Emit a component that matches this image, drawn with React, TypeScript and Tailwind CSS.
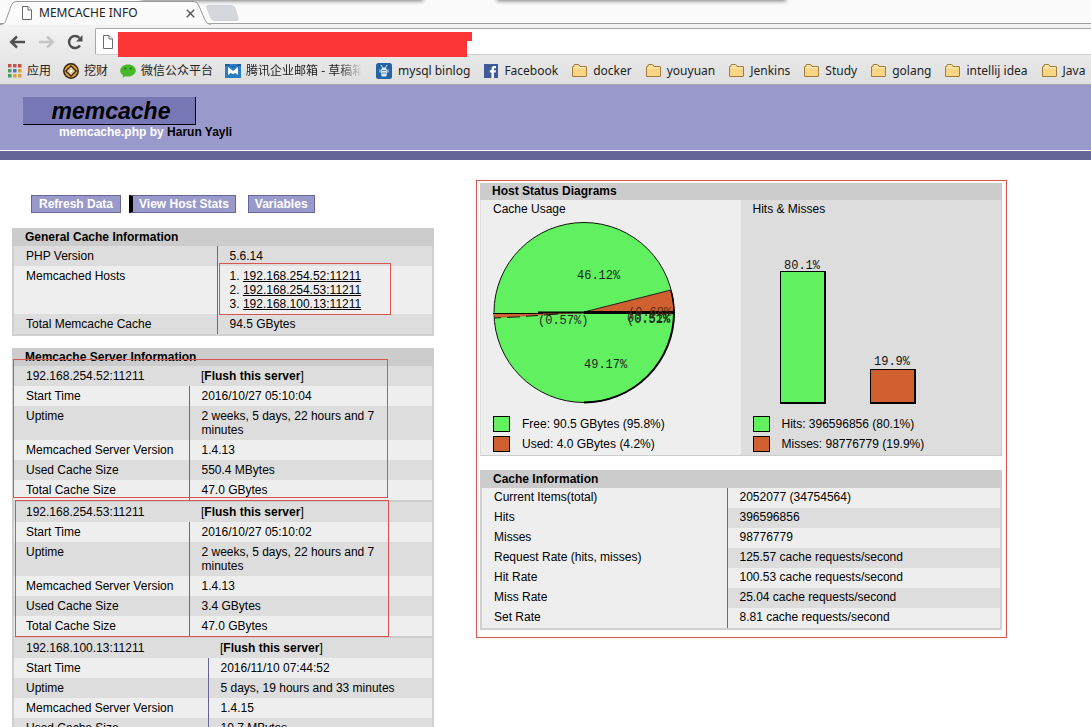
import { ReactNode } from "react";

type Row = [string, ReactNode];

const hosts = ["192.168.254.52:11211", "192.168.254.53:11211", "192.168.100.13:11211"];

const servers: { host: string; wide?: boolean; rows: Row[] }[] = [
  {
    host: hosts[0],
    rows: [
      ["Start Time", "2016/10/27 05:10:04"],
      ["Uptime", "2 weeks, 5 days, 22 hours and 7 minutes"],
      ["Memcached Server Version", "1.4.13"],
      ["Used Cache Size", "550.4 MBytes"],
      ["Total Cache Size", "47.0 GBytes"],
    ],
  },
  {
    host: hosts[1],
    rows: [
      ["Start Time", "2016/10/27 05:10:02"],
      ["Uptime", "2 weeks, 5 days, 22 hours and 7 minutes"],
      ["Memcached Server Version", "1.4.13"],
      ["Used Cache Size", "3.4 GBytes"],
      ["Total Cache Size", "47.0 GBytes"],
    ],
  },
  {
    host: hosts[2],
    wide: true,
    rows: [
      ["Start Time", "2016/11/10 07:44:52"],
      ["Uptime", "5 days, 19 hours and 33 minutes"],
      ["Memcached Server Version", "1.4.15"],
      ["Used Cache Size", "10.7 MBytes"],
    ],
  },
];

const cacheInfo: Row[] = [
  ["Current Items(total)", "2052077 (34754564)"],
  ["Hits", "396596856"],
  ["Misses", "98776779"],
  ["Request Rate (hits, misses)", "125.57 cache requests/second"],
  ["Hit Rate", "100.53 cache requests/second"],
  ["Miss Rate", "25.04 cache requests/second"],
  ["Set Rate", "8.81 cache requests/second"],
];

/* ---------- browser ---------- */

const PageIcon = () => (
  <svg width="12" height="14" viewBox="0 0 12 14" className="shrink-0" fill="#fff" stroke="#6b6b6b">
    <path d="M1.5.5h5.5l3.5 3.5v9.500h-9z" />
    <path d="M7 .5v3.500h3.500" />
  </svg>
);

const AppsIcon = () => (
  <svg width="14" height="14" viewBox="0 0 14 14" className="shrink-0">
    <path fill="#c8504a" d="M0 0h3.500v3.500H0zM5 0h3.500v3.500H5zM10 0h3.500v3.500H10z" />
    <path fill="#4a9a62" d="M0 5h3.500v3.500H0z" />
    <path fill="#4a78c8" d="M5 5h3.500v3.500H5z" />
    <path fill="#dca23c" d="M10 5h3.500v3.500H10z" />
    <path fill="#4a9a62" d="M0 10h3.500v3.500H0z" />
    <path fill="#dca23c" d="M5 10h3.500v3.500H5zM10 10h3.500v3.500H10z" />
  </svg>
);

const CoinIcon = () => (
  <svg width="16" height="16" viewBox="0 0 16 16" className="shrink-0">
    <circle cx="8" cy="8" r="7.200" fill="#e0a030" stroke="#2e2418" strokeWidth="1.500" />
    <path d="M8 3 13 8 8 13 3 8z" fill="#fff" stroke="#3a2a18" strokeWidth="1.500" />
    <path d="M8 5.500 10.500 8 8 10.500 5.500 8z" fill="#fff" stroke="#e0a030" />
  </svg>
);

const WechatIcon = () => (
  <svg width="16" height="16" viewBox="0 0 16 16" className="shrink-0">
    <path
      d="M8 1.500c4.400 0 7.800 2.700 7.800 6s-3.400 6-7.800 6c-.9 0-1.800-.1-2.600-.3L2.500 14.800l.6-2.600C1.300 11.100.2 9.400.2 7.500c0-3.300 3.400-6 7.800-6z"
      fill="#46b829"
    />
    <circle cx="5.200" cy="5.600" r="1" fill="#1f6a12" />
    <circle cx="10.800" cy="5.600" r="1" fill="#1f6a12" />
  </svg>
);

const MailIcon = () => (
  <svg width="16" height="14" viewBox="0 0 16 14" className="shrink-0">
    <path d="M0 0h16v14H0z" fill="#2a7fc4" />
    <path d="M0 0h3l5 4 5-4h3v2H0z" fill="#1a5a9c" />
    <path d="M3 3l5 4 5-4v8l-2.500-2L8 10 5.500 9 3 11z" fill="#fff" />
  </svg>
);

const BinlogIcon = () => (
  <svg width="16" height="16" viewBox="0 0 16 16" className="shrink-0">
    <rect width="16" height="16" rx="2.500" fill="#2463a4" />
    <path d="M5 2l1.500 2.500M11 2 9.500 4.500M4 6.500v3M12 6.500v3" stroke="#dcebf8" fill="none" />
    <path d="M6 4.500h4l1 3-.5 6h-5L5 7.500z" fill="#dcebf8" />
    <path d="M6 7.500h4M6 10h4" stroke="#2463a4" strokeWidth=".7" />
  </svg>
);

const FacebookIcon = () => (
  <svg width="14" height="14" viewBox="0 0 14 14" className="shrink-0">
    <path d="M0 0h14v14H0z" fill="#3f5a98" />
    <path
      d="M7.500 14V8.500H5.800V6.300h1.700V4.800c0-1.900 1.100-2.800 2.800-2.800h1.700v2.200h-1.100c-.8 0-1 .4-1 1v1.100H12l-.3 2.200H9.900V14z"
      fill="#fff"
    />
  </svg>
);

const FolderIcon = () => (
  <svg width="15" height="14" viewBox="0 0 15 14" className="shrink-0">
    <path d="M.5 3V12.500h13.500q.5 0 .5-.5V3q0-.5-.5-.5H8L7 .8Q6.800.5 6.500.5h-4Q2 .5 2 1v1.500H1q-.5 0-.5.5z" fill="#f8d584" stroke="#a67a3c" />
    <path d="M1.500 3.800h12M2.800 1.800h3.500" stroke="#fdf0c8" />
  </svg>
);

const zhBookmarks: { label: string; icon: ReactNode; faded?: boolean }[] = [
  { label: "应用", icon: <AppsIcon /> },
  { label: "挖财", icon: <CoinIcon /> },
  { label: "微信公众平台", icon: <WechatIcon /> },
  { label: "腾讯企业邮箱 - 草稿箱", icon: <MailIcon />, faded: true },
];

const bookmarks: { label: string; icon: ReactNode }[] = [
  { label: "mysql binlog", icon: <BinlogIcon /> },
  { label: "Facebook", icon: <FacebookIcon /> },
  ...["docker", "youyuan", "Jenkins", "Study", "golang", "intellij idea", "Java"].map((label) => ({
    label,
    icon: <FolderIcon />,
  })),
];

const TabStrip = () => (
  <div className="relative h-6 bg-[#fbfbfb]">
    <div className="absolute -top-2 left-[142px] h-2 w-[280px] shadow-[0_0_4px_1px_#777]" />
    <div className="absolute -top-2 left-[498px] h-2 w-[287px] shadow-[0_0_4px_1px_#777]" />
    <div className="absolute inset-x-0 bottom-0 h-px bg-[#a2a2a2]" />
    <svg className="absolute left-0 top-0" width="245" height="25" viewBox="0 0 245 25">
      <path d="M0 24.500C4 24.500 5 23 6 20L11 6Q12.500 1.500 16 1.500H194Q197 1.500 199 6L205 20Q207 24.500 211 24.500" fill="#fbfbfb" stroke="#999" />
      <path d="M208 5.500H231Q234 5.500 235 8L238 18Q239 20.500 236 20.500H215Q212 20.500 211 18L207 8Q206 5.500 208 5.500z" fill="#d4d7dc" stroke="#cfd2d6" />
    </svg>
    <div className="relative flex h-6 w-[200px] items-center pl-[21px] pt-[2px]">
      <PageIcon />
      <span className="ml-[6px] flex-1 text-xs text-[#222]">MEMCACHE INFO</span>
      <button aria-label="Close tab" className="mr-[5px]">
        <svg width="9" height="9" viewBox="0 0 9 9" stroke="#5a5a5a" strokeWidth="1.500">
          <path d="M.8.8l7.400 7.400M8.200.8.8 8.200" />
        </svg>
      </button>
    </div>
  </div>
);

const Toolbar = () => (
  <div className="flex h-[34px] items-center pl-[9px] pt-px">
    <button aria-label="Back">
      <svg width="17" height="14" viewBox="0 0 17 14" fill="none" stroke="#505050" strokeWidth="2.500">
        <path d="M16 7H3M8 1.500 2.200 7 8 12.500" />
      </svg>
    </button>
    <button aria-label="Forward" className="ml-3">
      <svg width="17" height="14" viewBox="0 0 17 14" fill="none" stroke="#c6c6c6" strokeWidth="2.500">
        <path d="M1 7h13M9 1.500 14.800 7 9 12.500" />
      </svg>
    </button>
    <button aria-label="Reload" className="ml-3">
      <svg width="17" height="16" viewBox="0 0 17 16">
        <path d="M13 11.500A6 6 0 1 1 12.500 4" fill="none" stroke="#505050" strokeWidth="2.500" />
        <path d="M15.500 1v6.500H9z" fill="#505050" />
      </svg>
    </button>
    <div className="relative ml-[11px] flex h-[27px] flex-1 items-center rounded-l-xs border border-r-0 border-[#a8a8a8] border-b-[#cfcfcf] bg-white pl-[6px]">
      <PageIcon />
      <input aria-label="Address" className="ml-1 h-full flex-1 bg-transparent outline-none" />
      <div className="absolute left-[22px] top-[3px] h-[9px] w-[354px] bg-[#fc3636]" />
      <div className="absolute left-[22px] top-3 h-4 w-[349px] bg-[#fc3636]" />
    </div>
  </div>
);

const Bookmarks = () => (
  <nav className="flex h-[26px] items-center gap-[14px] overflow-hidden whitespace-nowrap pl-2 text-xs text-[#222]">
    <div className="flex shrink-0 gap-3">
      {zhBookmarks.map(({ label, icon, faded }) => (
        <a key={label} href="#" className="flex items-center gap-[5px]">
          {icon}
          <span
            className={
              faded ? "w-[116px] overflow-hidden [mask-image:linear-gradient(to_right,black_80%,transparent)]" : ""
            }
          >
            {label}
          </span>
        </a>
      ))}
    </div>
    {bookmarks.map(({ label, icon }) => (
      <a key={label} href="#" className="flex shrink-0 items-center gap-[6px]">
        {icon}
        {label}
      </a>
    ))}
  </nav>
);

/* ---------- tables ---------- */

const Title = ({ children }: { children: ReactNode }) => (
  <h2 className="bg-[#ccc] px-[13px] py-[2px] font-bold">{children}</h2>
);

const Panel = ({ title, children }: { title: string; children: ReactNode }) => (
  <section>
    <Title>{title}</Title>
    <div className="border-2 border-t-0 border-[#d0d0d0]">{children}</div>
  </section>
);

const GeneralInfo = () => (
  <Panel title="General Cache Information">
    <table className="w-full text-left align-top">
      <tbody className="[&_td]:px-3 [&_td]:py-[3px] [&_th]:w-[203px] [&_th]:border-r [&_th]:border-[#669] [&_th]:px-3 [&_th]:py-[3px] [&_th]:align-top [&_th]:font-normal">
        <tr className="bg-[#ddd]">
          <th scope="row">PHP Version</th>
          <td>5.6.14</td>
        </tr>
        <tr className="bg-[#eee]">
          <th scope="row">Memcached Hosts</th>
          <td className="relative">
            <ol>
              {hosts.map((host, i) => (
                <li key={host}>
                  {i + 1}.{" "}
                  <a href="#" className="underline">
                    {host}
                  </a>
                </li>
              ))}
            </ol>
            <div className="pointer-events-none absolute -top-[3px] left-px h-[52px] w-[172px] border border-[#d9534f]" />
          </td>
        </tr>
        <tr className="bg-[#ddd]">
          <th scope="row">Total Memcache Cache</th>
          <td>94.5 GBytes</td>
        </tr>
      </tbody>
    </table>
  </Panel>
);

const ServerInfo = () => (
  <div className="relative">
    <Panel title="Memcache Server Information">
      {servers.map(({ host, wide, rows }, n) => (
        <table key={host} className={`w-full text-left ${n > 0 ? "border-t-2 border-[#ccc]" : ""}`}>
          <tbody>
            <tr className="bg-[#ddd]">
              <th scope="row" className={`px-3 py-[3px] font-normal ${wide ? "w-[194px]" : "w-[175px]"}`}>
                {host}
              </th>
              <td className="px-3 py-[3px]">
                [
                <a href="#" className="font-bold">
                  Flush this server
                </a>
                ]
              </td>
            </tr>
            {rows.map(([name, value], i) => (
              <tr key={name} className={i % 2 ? "bg-[#ddd]" : "bg-[#eee]"}>
                <th scope="row" className="border-r border-[#669] px-3 py-[3px] align-top font-normal">
                  {name}
                </th>
                <td className="py-[3px] pl-3 pr-6">{value}</td>
              </tr>
            ))}
          </tbody>
        </table>
      ))}
    </Panel>
    <div className="pointer-events-none absolute left-px right-[46px] top-[11px] h-[139px] border border-[#d9534f]" />
    <div className="pointer-events-none absolute left-[3px] right-[45px] top-[152px] h-[137px] border border-[#d9534f]" />
  </div>
);

/* ---------- charts ---------- */

const Legend = ({ items }: { items: string[] }) => (
  <ul>
    {items.map((text, i) => (
      <li key={text} className="flex h-5 items-center gap-3">
        <span className={`h-4 w-[17px] border border-black ${i ? "bg-[#d06030]" : "bg-[#60f060]"}`} />
        {text}
      </li>
    ))}
  </ul>
);

const Pie = () => (
  <svg width="190" height="194" viewBox="0 0 190 194" className="block">
    <circle cx="91" cy="92.500" r="90" fill="#60f060" stroke="#111" />
    <path d="M91 92 178 70A90 90 0 0 1 181 92z" fill="#d06030" stroke="#222" />
    <path d="M91 93H1L2 98 60 94.500z" fill="#d06030" />
    <path d="M0 93.500H50" stroke="#000" />
    <path d="M2 98 8 97.600M14 97.400 27 96.800M33 96.200 45 95.500M51 95 65 94" stroke="#111" />
    <path d="M45 92.500H91" stroke="#000" strokeWidth="2" />
    <path d="M91 92.500H181" stroke="#000" strokeWidth="3" />
    <path d="M178 71Q181 81 181 93" fill="none" stroke="#000" strokeWidth="1.500" />
    <path d="M181 92.500A90 90 0 0 1 91 182.500" fill="none" stroke="#000" strokeWidth="2" />
    <g fontSize="12" fill="#202820" className="font-['Liberation_Mono',monospace]">
      <text x="84" y="59">46.12%</text>
      <text x="91" y="148">49.17%</text>
      <text x="45" y="104">(0.57%)</text>
      <text x="135" y="96" fill="#5a2c14">(0.68%</text>
      <text x="134" y="103">(0.52%</text>
      <text x="134" y="102">00.51%</text>
    </g>
  </svg>
);

const Bars = () => (
  <svg width="190" height="194" viewBox="0 0 190 194" className="block">
    <path d="M27 51h46v133H27zM117 149h46v35h-46z" fill="#000" />
    <path d="M28 52h43v130H28z" fill="#60f060" />
    <path d="M118 150h43v32h-43z" fill="#d06030" />
    <g fontSize="12" fill="#111" className="font-['Liberation_Mono',monospace]">
      <text x="31" y="49">80.1%</text>
      <text x="121" y="145">19.9%</text>
    </g>
  </svg>
);

const Diagrams = () => (
  <section>
    <h2 className="bg-[#ccc] px-3 pb-[2px] pt-px font-bold">Host Status Diagrams</h2>
    <div className="grid grid-cols-2 border-b border-r border-[#ccc] bg-[#ddd]">
      <figure className="border-l border-[#ddd] bg-[#eee] pb-px pl-3">
        <figcaption className="h-5 pt-[2px]">Cache Usage</figcaption>
        <Pie />
        <Legend items={["Free: 90.5 GBytes (95.8%)", "Used: 4.0 GBytes (4.2%)"]} />
      </figure>
      <figure className="bg-[#ddd] pb-px pl-3">
        <figcaption className="h-5 pt-[2px]">Hits &amp; Misses</figcaption>
        <Bars />
        <Legend items={["Hits: 396596856 (80.1%)", "Misses: 98776779 (19.9%)"]} />
      </figure>
    </div>
  </section>
);

const CacheInfo = () => (
  <Panel title="Cache Information">
    <table className="w-full text-left">
      <tbody>
        {cacheInfo.map(([name, value], i) => (
          <tr key={name}>
            <th scope="row" className="w-[245px] border-r border-[#669] bg-[#eee] px-3 pb-1 pt-[2px] font-normal">
              {name}
            </th>
            <td className={`px-3 pb-1 pt-[2px] ${i % 2 ? "bg-[#ddd]" : "bg-[#eee]"}`}>{value}</td>
          </tr>
        ))}
      </tbody>
    </table>
  </Panel>
);

export default function App() {
  return (
    <div className="flex h-screen flex-col overflow-hidden bg-white font-['Liberation_Sans',Arial,sans-serif] text-xs leading-[14px] text-black">
      <header className="shrink-0 border-b border-[#a5a5ad] bg-linear-to-b from-[#fbfbfb] to-[#dfdfdf] font-['Noto_Sans','Noto_Sans_CJK_SC',sans-serif]">
        <TabStrip />
        <Toolbar />
        <Bookmarks />
      </header>

      <div className="shrink-0 border-b border-white bg-[#99c] pb-[11px] pl-[23px] pt-3">
        <h1 className="flex h-7 w-[173px] items-center justify-center border-b border-r border-black bg-[#7777b6] pl-1 text-[23px] font-bold italic">
          memcache
        </h1>
        <p className="pl-9 font-bold text-white">
          memcache.php by{" "}
          <a href="#" className="text-black">
            Harun Yayli
          </a>
        </p>
      </div>
      <div className="h-[9px] shrink-0 bg-[#669]" />

      <main className="grid grid-cols-[422fr_531fr] gap-[42px] pl-3 pr-[84px] pt-5">
        <div>
          <nav className="mb-[15px] flex gap-2 pl-[19px] pt-[15px] font-bold text-white">
            <a href="#" className="border border-[#669] bg-[#99c] px-[7px] py-px">
              Refresh Data
            </a>
            <a href="#" className="border border-l-4 border-[#669] border-l-black bg-[#99c] px-[6px] py-px">
              View Host Stats
            </a>
            <a href="#" className="ml-1 border border-[#669] bg-[#99c] px-[6px] py-px">
              Variables
            </a>
          </nav>
          <div className="flex flex-col gap-3">
            <GeneralInfo />
            <ServerInfo />
          </div>
        </div>
        <div className="flex flex-col gap-[14px] self-start border border-[#d9534f] pb-[7px] pl-[3px] pr-1 pt-[2px]">
          <Diagrams />
          <CacheInfo />
        </div>
      </main>
    </div>
  );
}
